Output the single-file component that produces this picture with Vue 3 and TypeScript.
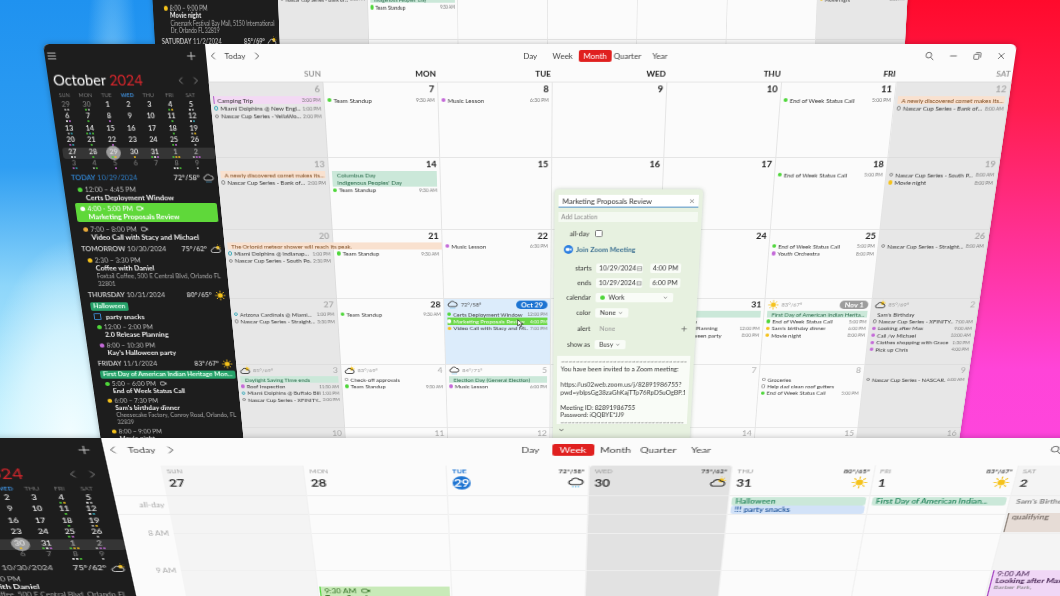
<template>
  <div class="desk">
    <svg class="sprite" aria-hidden="true">
      <symbol id="i-cloud" viewBox="0 0 24 24">
        <circle cx="17" cy="8" r="4" fill="#f5c21b" />
        <path d="M17 1v1.5M23.5 8H22M21.6 3.4l-1 1" stroke="#f5c21b" stroke-width="1.5" fill="none" />
        <path d="M6.5 19a4 4 0 0 1-.6-8A6 6 0 0 1 17 9.8 4.6 4.6 0 0 1 18 19z" fill="none" stroke="currentColor" stroke-width="2" />
      </symbol>
      <symbol id="i-rain" viewBox="0 0 24 24">
        <path d="M6.5 16a4 4 0 0 1-.6-8A6 6 0 0 1 17 6.8 4.6 4.6 0 0 1 18 16z" fill="none" stroke="currentColor" stroke-width="2" />
        <path d="M8 19v2M12 19v2M16 19v2" stroke="#4fb3e8" stroke-width="2" />
      </symbol>
      <symbol id="i-sun" viewBox="0 0 24 24">
        <circle cx="12" cy="12" r="5.5" fill="#f5c21b" />
        <path d="M12 1v4M12 19v4M1 12h4M19 12h4M4 4l3 3M17 17l3 3M20 4l-3 3M7 17l-3 3" stroke="#f5c21b" stroke-width="2" />
      </symbol>
      <symbol id="i-video" viewBox="0 0 24 24">
        <rect x="2" y="6" width="14" height="12" rx="3" fill="none" stroke="currentColor" stroke-width="2.4" />
        <path d="M16 11l6-4v10l-6-4z" fill="currentColor" />
      </symbol>
    </svg>

    <section v-for="w in windows" :key="w.id" class="win" :class="`win-${w.id}`">
      <aside class="side">
        <template v-if="w.view !== 'back'">
          <div class="side-top">
            <svg class="ico" viewBox="0 0 12 12"><path d="M1 2.5h10M1 6h10M1 9.5h10" /></svg>
            <svg class="ico" viewBox="0 0 12 12"><path d="M6 1v10M1 6h10" /></svg>
          </div>
          <div class="side-title">
            <h1>October <b>2024</b></h1>
            <svg class="ico arrow" viewBox="0 0 12 12"><path d="M8 2L4 6l4 4" /></svg>
            <svg class="ico arrow" viewBox="0 0 12 12"><path d="M4 2l4 4-4 4" /></svg>
          </div>
          <div class="mini-days">
            <span v-for="d in dayNames" :key="d" :class="{ wed: d === 'WED' }">{{ d }}</span>
          </div>
          <div v-for="(row, r) in miniRows" :key="r" class="mini-row" :class="{ hl: r === 4 }">
            <div v-for="c in row" :key="c.key" class="mini-cell" :class="{ off: c.off, sel: r === 4 && c.d === w.sel }">
              <span>{{ c.d }}</span>
              <i class="mini-dots"><u v-for="(col, k) in c.dots" :key="k" :style="{ background: col }" /></i>
            </div>
          </div>
        </template>

        <div class="agenda">
          <template v-for="(a, i) in w.agenda" :key="i">
            <div v-if="a.type === 'head'" class="ag-head" :class="{ today: a.today }">
              <b>{{ a.label }}</b>&nbsp;<span>{{ a.date }}</span>
              <em>{{ a.temp }}</em>
              <svg class="wx"><use :href="`#i-${a.icon}`" /></svg>
            </div>
            <div v-else-if="a.type === 'pill'" class="ag-pill">{{ a.text }}</div>
            <div v-else-if="a.type === 'todo'" class="ag-todo"><i />{{ a.text }}</div>
            <div v-else class="ag-ev" :class="{ active: a.active }">
              <div class="ag-time">
                <i class="ag-dot" :style="{ background: a.dot }" />{{ a.time }}
                <svg v-if="a.video" class="vid"><use href="#i-video" /></svg>
              </div>
              <div class="ag-title">{{ a.title }}</div>
              <div v-for="l in a.loc" :key="l" class="ag-loc">{{ l }}</div>
            </div>
          </template>
        </div>
      </aside>

      <main class="main">
        <div v-if="w.view !== 'back'" class="topbar">
          <div class="nav">
            <svg class="ico" viewBox="0 0 12 12"><path d="M8 2L4 6l4 4" /></svg>
            <span>Today</span>
            <svg class="ico" viewBox="0 0 12 12"><path d="M4 2l4 4-4 4" /></svg>
          </div>
          <div class="views">
            <span v-for="v in viewNames" :key="v" :class="{ on: v === w.activeView }">{{ v }}</span>
          </div>
          <div class="controls">
            <svg class="ico" viewBox="0 0 12 12"><circle cx="5" cy="5" r="3.4" /><path d="M7.5 7.5L11 11" /></svg>
            <svg class="ico" viewBox="0 0 12 12"><path d="M2 6h8" /></svg>
            <svg class="ico" viewBox="0 0 12 12"><rect x="2" y="4" width="6" height="6" rx="1" /><path d="M4 2h5a1 1 0 0 1 1 1v5" /></svg>
            <svg class="ico" viewBox="0 0 12 12"><path d="M2.5 2.5l7 7M9.5 2.5l-7 7" /></svg>
          </div>
        </div>

        <template v-if="w.view !== 'week'">
          <div v-if="w.view === 'month'" class="month-head">
            <span v-for="(d, i) in dayNames" :key="d" :class="{ wk: i === 0 || i === 6 }">{{ d }}</span>
          </div>
          <div class="month">
            <div
              v-for="c in w.view === 'back' ? backCells : monthCells"
              :key="c.key"
              class="cell"
              :class="{ weekend: c.weekend, today: c.today, off: c.off }"
            >
              <div class="cell-head">
                <svg v-if="c.icon" class="wx"><use :href="`#i-${c.icon}`" /></svg>
                <span v-if="c.temp" class="cell-temp">{{ c.temp }}</span>
                <span v-if="c.pill" class="cell-pill" :class="{ blue: c.today }">{{ c.pill }}</span>
                <span v-else class="cell-num">{{ c.d }}</span>
              </div>
              <div v-for="(e, i) in c.evs" :key="i" class="ev" :class="`k-${e.k}`">
                <i class="mark" />
                <span class="ev-t">{{ e.t }}</span>
                <span v-if="e.at" class="ev-at">{{ e.at }}</span>
              </div>
            </div>
          </div>
        </template>

        <div v-else class="week">
          <div class="gutter">
            <div class="wk-head" />
            <div class="wk-allday gut-l">all-day</div>
            <div class="gut-hours">
              <span v-for="h in ['8 AM', '9 AM']" :key="h">{{ h }}</span>
            </div>
          </div>
          <div v-for="d in weekDays" :key="d.name" class="wk-col" :class="d.shade">
            <div class="wk-head">
              <div class="wk-info">
                <span class="wk-name" :class="{ blue: d.today }">{{ d.name }}</span>
                <span class="wk-temp">{{ d.temp }}</span>
              </div>
              <div class="wk-info">
                <span class="wk-num" :class="{ circle: d.today }">{{ d.num }}</span>
                <svg v-if="d.icon" class="wx big"><use :href="`#i-${d.icon}`" /></svg>
              </div>
            </div>
            <div class="wk-allday">
              <div v-for="b in d.banners" :key="b.t" class="wk-banner" :class="b.k">{{ b.t }}</div>
            </div>
            <div class="wk-body">
              <div v-for="e in d.events" :key="e.time" class="wk-ev" :class="e.k" :style="{ top: e.top + 'px', height: e.h + 'px' }">
                <div class="wk-ev-time">{{ e.time }}<svg v-if="e.video" class="vid"><use href="#i-video" /></svg></div>
                <div class="wk-ev-title">{{ e.title }}</div>
                <div class="wk-ev-loc">{{ e.loc }}</div>
              </div>
            </div>
          </div>
        </div>
      </main>

      <template v-if="w.view === 'month'">
        <svg class="cursor" viewBox="0 0 10 14"><path d="M1 1v10l2.6-2.2L5.4 13l1.8-.8-1.8-4H9z" fill="#fff" stroke="#222" stroke-width="0.9" /></svg>
        <div class="pop">
          <div class="pop-title">
            <span>Marketing Proposals Review</span>
            <svg class="ico" viewBox="0 0 12 12"><path d="M3 3l6 6M9 3l-6 6" /></svg>
          </div>
          <div class="pop-loc">Add Location</div>
          <div class="pop-row pop-allday"><label>all-day</label><i class="pop-check" /></div>
          <div class="pop-zoom">
            <svg viewBox="0 0 24 24" class="zoom-ico">
              <circle cx="12" cy="12" r="12" fill="#2d7fe0" />
              <rect x="5" y="8" width="10" height="8" rx="2" fill="#fff" />
              <path d="M16 11l4-3v8l-4-3z" fill="#fff" />
            </svg>
            Join Zoom Meeting
          </div>
          <div v-for="r in dateRows" :key="r.l" class="pop-row date-row">
            <label>{{ r.l }}</label>
            <span class="field date">10/29/2024
              <svg viewBox="0 0 12 12" class="cal"><rect x="2" y="3" width="8" height="7" /><path d="M2 5.5h8" /></svg>
            </span>
            <span class="field time">{{ r.t }}</span>
          </div>
          <div class="pop-row">
            <label>calendar</label>
            <span class="field wide"><i class="wdot" />Work<svg viewBox="0 0 12 12" class="chev"><path d="M3 4.5l3 3 3-3" /></svg></span>
          </div>
          <div class="pop-row">
            <label>color</label>
            <span class="field">None<svg viewBox="0 0 12 12" class="chev"><path d="M3 4.5l3 3 3-3" /></svg></span>
          </div>
          <div class="pop-row tall">
            <label>alert</label>
            <span class="muted">None</span>
            <svg class="ico plus" viewBox="0 0 12 12"><path d="M6 2v8M2 6h8" /></svg>
          </div>
          <div class="pop-row">
            <label>show as</label>
            <span class="field">Busy<svg viewBox="0 0 12 12" class="chev"><path d="M3 4.5l3 3 3-3" /></svg></span>
          </div>
          <div class="pop-notes">
            <p v-for="(n, i) in notes" :key="i">{{ n }}</p>
          </div>
          <svg class="ico pop-more" viewBox="0 0 12 12"><path d="M3 4.5l3 3 3-3" /></svg>
        </div>
      </template>
    </section>
  </div>
</template>

<script setup lang="ts">
type Kind = 'green' | 'purple' | 'yellow' | 'teal' | 'gray' | 'box' | 'gap' | 'none' | 'b-green' | 'b-orange' | 'b-pink' | 'b-live' | 'b-orange wide'
interface Ev { k: Kind; t: string; at?: string }
interface Cell { d: string; off?: boolean; icon?: string; temp?: string; pill?: string; today?: boolean; evs?: Ev[] }
interface Agenda {
  type: 'head' | 'pill' | 'todo' | 'ev'
  label?: string; date?: string; temp?: string; icon?: string; today?: boolean
  text?: string
  time?: string; title?: string; loc?: string[]; dot?: string; video?: boolean; active?: boolean
}

const GREEN = '#4fd63a'
const PURPLE = '#c46ad8'
const YELLOW = '#f5c21b'
const TEAL = '#35a7b8'

const dayNames = ['SUN', 'MON', 'TUE', 'WED', 'THU', 'FRI', 'SAT']
const viewNames = ['Day', 'Week', 'Month', 'Quarter', 'Year']

const dotMap: Record<string, string[]> = {
  '0-0': ['#bbb', '#bbb'], '0-1': [GREEN, '#bbb'], '0-5': [GREEN, YELLOW], '0-6': ['#fff', '#bbb'],
  '1-0': ['#fff', PURPLE], '1-1': [GREEN], '1-2': [PURPLE], '1-5': [GREEN], '1-6': ['#fff', TEAL],
  '2-0': ['#bbb', TEAL], '2-1': [GREEN, TEAL, GREEN], '2-5': [GREEN], '2-6': ['#bbb', YELLOW],
  '3-0': [PURPLE, TEAL], '3-1': [GREEN], '3-2': [PURPLE], '3-5': [GREEN, PURPLE], '3-6': ['#bbb'],
  '4-0': ['#fff', '#bbb'], '4-1': [GREEN], '4-2': [GREEN, YELLOW], '4-3': [YELLOW], '4-4': [GREEN, '#fff', PURPLE], '4-5': [GREEN, YELLOW, YELLOW], '4-6': ['#bbb', PURPLE, PURPLE],
  '5-0': [PURPLE, TEAL], '5-1': ['#bbb', GREEN], '5-2': [PURPLE], '5-5': ['#fff', '#fff', GREEN], '5-6': ['#bbb'],
}

function buildMini() {
  const labels = [29, 30, ...Array.from({ length: 31 }, (_, i) => i + 1), ...Array.from({ length: 9 }, (_, i) => i + 1)]
  return Array.from({ length: 6 }, (_, r) =>
    Array.from({ length: 7 }, (_, c) => {
      const idx = r * 7 + c
      return { key: `${r}-${c}`, d: labels[idx], off: idx < 2 || idx > 32, dots: dotMap[`${r}-${c}`] || [] }
    }),
  )
}
const miniRows = buildMini()

const heads = {
  today: { type: 'head', label: 'TODAY', date: '10/29/2024', temp: '72°/58°', icon: 'rain', today: true },
  tomorrow: { type: 'head', label: 'TOMORROW', date: '10/30/2024', temp: '75°/62°', icon: 'cloud' },
} as Record<string, Agenda>

const movie: Agenda = {
  type: 'ev', time: '8:00 – 9:00 PM', title: 'Movie night', dot: YELLOW,
  loc: ['Cinemark Festival Bay Mall, 5150 International', 'Dr, Orlando FL 32819'],
}
const saturday: Agenda = { type: 'head', label: 'SATURDAY', date: '11/2/2024', temp: '85°/69°', icon: 'cloud' }
const coffee: Agenda = {
  type: 'ev', time: '2:30 – 3:30 PM', title: 'Coffee with Daniel', dot: YELLOW,
  loc: ['Foxtail Coffee, 500 E Central Blvd, Orlando FL', '32801'],
}

const midAgenda: Agenda[] = [
  heads.today,
  { type: 'ev', time: '12:00 – 4:45 PM', title: 'Certs Deployment Window', dot: GREEN },
  { type: 'ev', time: '4:00 - 5:00 PM', title: 'Marketing Proposals Review', dot: '#fff', video: true, active: true },
  { type: 'ev', time: '7:00 – 8:00 PM', title: 'Video Call with Stacy and Michael', dot: '#e8a93a', video: true },
  heads.tomorrow,
  coffee,
  { type: 'head', label: 'THURSDAY', date: '10/31/2024', temp: '80°/65°', icon: 'sun' },
  { type: 'pill', text: 'Halloween' },
  { type: 'todo', text: 'party snacks' },
  { type: 'ev', time: '12:00 – 2:00 PM', title: '2.0 Release Planning', dot: GREEN },
  { type: 'ev', time: '8:00 – 10:30 PM', title: "Kay's Halloween party", dot: PURPLE },
  { type: 'head', label: 'FRIDAY', date: '11/1/2024', temp: '83°/67°', icon: 'sun' },
  { type: 'pill', text: 'First Day of American Indian Heritage Mon...' },
  { type: 'ev', time: '5:00 – 6:00 PM', title: 'End of Week Status Call', dot: GREEN, video: true },
  { type: 'ev', time: '6:00 – 7:30 PM', title: "Sam's birthday dinner", dot: YELLOW, loc: ['Cheesecake Factory, Conroy Road, Orlando, FL', '32839'] },
  movie,
]

const windows = [
  { id: 'back', view: 'back', sel: 0, activeView: '', agenda: [movie, saturday] },
  { id: 'mid', view: 'month', sel: 29, activeView: 'Month', agenda: midAgenda },
  { id: 'front', view: 'week', sel: 30, activeView: 'Week', agenda: [heads.tomorrow, coffee] },
]

const standup: Ev = { k: 'green', t: 'Team Standup', at: '9:30 AM' }
const status: Ev = { k: 'green', t: 'End of Week Status Call', at: '5:00 PM' }
const music: Ev = { k: 'purple', t: 'Music Lesson', at: '6:30 PM' }

const weeks: Cell[][] = [
  [
    { d: '6', evs: [{ k: 'b-pink', t: 'Camping Trip', at: '3:00 PM' }, { k: 'teal', t: 'Miami Dolphins @ New Engl...', at: '1:00 PM' }, { k: 'gray', t: 'Nascar Cup Series - YellaWo...', at: '2:00 PM' }] },
    { d: '7', evs: [standup] },
    { d: '8', evs: [music] },
    { d: '9' },
    { d: '10' },
    { d: '11', evs: [status] },
    { d: '12', evs: [{ k: 'b-orange', t: 'A newly discovered comet makes its...' }, { k: 'gray', t: 'Nascar Cup Series - Bank of...', at: '8:00 AM' }] },
  ],
  [
    { d: '13', evs: [{ k: 'b-orange', t: 'A newly discovered comet makes its...' }, { k: 'gray', t: 'Nascar Cup Series - Bank of...', at: '2:00 PM' }] },
    { d: '14', evs: [{ k: 'b-green', t: 'Columbus Day' }, { k: 'b-green', t: "Indigenous Peoples' Day" }, standup] },
    { d: '15' },
    { d: '16' },
    { d: '17' },
    { d: '18', evs: [status] },
    { d: '19', evs: [{ k: 'gray', t: 'Nascar Cup Series - South P...', at: '8:00 AM' }, { k: 'yellow', t: 'Movie night', at: '8:00 PM' }] },
  ],
  [
    { d: '20', evs: [{ k: 'b-orange wide', t: 'The Orionid meteor shower will reach its peak.' }, { k: 'teal', t: 'Miami Dolphins @ Indianap...', at: '1:00 PM' }, { k: 'gray', t: 'Nascar Cup Series - South Po...', at: '2:30 PM' }] },
    { d: '21', evs: [{ k: 'gap', t: '' }, standup] },
    { d: '22', evs: [music] },
    { d: '23' },
    { d: '24' },
    { d: '25', evs: [status, { k: 'purple', t: 'Youth Orchestra', at: '8:00 PM' }] },
    { d: '26', evs: [{ k: 'gray', t: 'Nascar Cup Series - Straight...', at: '8:00 AM' }] },
  ],
  [
    { d: '27', evs: [{ k: 'teal', t: 'Arizona Cardinals @ Miami...', at: '1:00 PM' }, { k: 'gray', t: 'Nascar Cup Series - Straight...', at: '3:30 PM' }] },
    { d: '28', evs: [standup] },
    { d: '29', today: true, pill: 'Oct 29', icon: 'rain', temp: '72°/58°', evs: [{ k: 'green', t: 'Certs Deployment Window', at: '12:00 PM' }, { k: 'b-live', t: 'Marketing Proposals Review', at: '4:00 PM' }, { k: 'yellow', t: 'Video Call with Stacy and Mi...', at: '7:00 PM' }] },
    { d: '30' },
    { d: '31', evs: [{ k: 'b-green', t: 'Halloween' }, { k: 'box', t: 'party snacks' }, { k: 'green', t: '2.0 Release Planning', at: '12:00 PM' }, { k: 'purple', t: "Kay's Halloween party", at: '8:00 PM' }] },
    { d: '1', pill: 'Nov 1', icon: 'sun', temp: '83°/67°', evs: [{ k: 'b-green', t: 'First Day of American Indian Herita...' }, status, { k: 'yellow', t: "Sam's birthday dinner", at: '6:00 PM' }, { k: 'yellow', t: 'Movie night', at: '8:00 PM' }] },
    { d: '2', off: true, icon: 'cloud', temp: '85°/69°', evs: [{ k: 'none', t: "Sam's Birthday" }, { k: 'gray', t: 'Nascar Cup Series - XFINITY...', at: '7:00 AM' }, { k: 'purple', t: 'Looking after Max', at: '9:00 AM' }, { k: 'purple', t: 'Call /w Michael', at: '10:00 AM' }, { k: 'purple', t: 'Clothes shopping with Grace', at: '1:30 PM' }, { k: 'purple', t: 'Pick up Chris', at: '4:00 PM' }] },
  ],
  [
    { d: '3', off: true, icon: 'cloud', temp: '85°/69°', evs: [{ k: 'b-green', t: 'Daylight Saving Time ends' }, { k: 'purple', t: 'Roof Inspection', at: '11:30 AM' }, { k: 'teal', t: 'Miami Dolphins @ Buffalo Bills', at: '1:00 PM' }, { k: 'gray', t: 'Nascar Cup Series - XFINITY...', at: '2:00 PM' }] },
    { d: '4', off: true, icon: 'cloud', temp: '83°/69°', evs: [{ k: 'box', t: 'Check-off approvals' }, standup] },
    { d: '5', off: true, icon: 'rain', temp: '84°/71°', evs: [{ k: 'b-green', t: 'Election Day (General Election)' }, { k: 'purple', t: 'Music Lesson', at: '6:00 PM' }] },
    { d: '6', off: true },
    { d: '7', off: true },
    { d: '8', off: true, evs: [{ k: 'box', t: 'Groceries' }, { k: 'box', t: 'Help dad clean roof gutters' }, status] },
    { d: '9', off: true, evs: [{ k: 'gray', t: 'Nascar Cup Series - NASCAR...', at: '6:00 AM' }] },
  ],
  ['10', '11', '12', '13', '14', '15', '16'].map((d) => ({ d, off: true })),
]

function flatten(rows: Cell[][], start: number) {
  return rows.flatMap((row, r) =>
    row.map((c, i) => ({ ...c, key: `${start + r}-${i}`, weekend: i === 0 || i === 6 })),
  )
}
const monthCells = flatten(weeks, 0)
const backCells = flatten(weeks.slice(1, 3), 1)

interface WeekEvent { title: string; time: string; loc: string; k: string; top: number; h: number; video?: boolean }
interface WeekDay {
  name: string; num: string; shade?: string; today?: boolean; temp?: string; icon?: string
  banners?: { t: string; k: string }[]; events?: WeekEvent[]
}
const weekDays: WeekDay[] = [
  { name: 'SUN', num: '27', shade: 'soft' },
  { name: 'MON', num: '28', events: [{ title: 'Team Standup', time: '9:30 AM', loc: '', k: 'ev-green', top: 81, h: 42, video: true }] },
  { name: 'TUE', num: '29', today: true, temp: '72°/58°', icon: 'rain' },
  { name: 'WED', num: '30', shade: 'gray', temp: '75°/62°', icon: 'cloud' },
  { name: 'THU', num: '31', temp: '80°/65°', icon: 'sun', banners: [{ t: 'Halloween', k: 'wb-green' }, { t: '!!! party snacks', k: 'wb-blue' }] },
  { name: 'FRI', num: '1', temp: '83°/67°', icon: 'sun', banners: [{ t: 'First Day of American Indian...', k: 'wb-green' }] },
  {
    name: 'SAT', num: '2', shade: 'soft', banners: [{ t: "Sam's Birthday", k: 'wb-plain' }],
    events: [
      { title: '', time: 'qualifying', loc: '', k: 'ev-beige', top: -2, h: 21 },
      { title: 'Looking after Max', time: '9:00 AM', loc: 'Barber Park,', k: 'ev-purple', top: 62, h: 42 },
    ],
  },
]

const dateRows = [{ l: 'starts', t: '4:00 PM' }, { l: 'ends', t: '6:00 PM' }]
const notes = [
  '~~~~~~~~~~~~~~~~~~~~~~~~~~~~~~~~~~~~~~~~',
  'You have been invited to a Zoom meeting:',
  '\u00a0',
  'https://us02web.zoom.us/j/82891986755?',
  'pwd=yblpsGg38zaGhKajTTp76RpDSuOgBP.1',
  '\u00a0',
  'Meeting ID: 82891986755',
  'Password: iQQBYE*JJ9',
  '~~~~~~~~~~~~~~~~~~~~~~~~~~~~~~~~~~~~~~~~',
]
</script>

<style scoped>
.desk {
  position: relative;
  width: 1060px;
  height: 596px;
  overflow: hidden;
  font-family: Lato, "Open Sans", sans-serif;
  filter: blur(0.4px);
  background:
    radial-gradient(ellipse 90px 200px at 70px 440px, #f2fdff 0, rgba(230, 250, 255, 0.7) 55%, rgba(200, 240, 255, 0) 100%) no-repeat,
    radial-gradient(ellipse 26px 170px at 112px 90px, rgba(170, 225, 252, 0.55) 0, rgba(170, 225, 252, 0) 100%) no-repeat,
    linear-gradient(180deg, #1f92f0 0, #2f9ef2 28%, #8ed6fa 48%, #bdeffd 70%, #dcf9fe 100%) left / 50% 100% no-repeat,
    linear-gradient(180deg, #ff0a2c 0, #ff1d4e 18%, #ff2f8e 38%, #ff44d8 62%, #fc48e6 100%) right / 50% 100% no-repeat;
}
.sprite { position: absolute; width: 0; height: 0; }

/* the windows sit on a tilted desktop, each is one flat box under a projective transform */
.win {
  position: absolute;
  left: 43px;
  width: 974px;
  display: flex;
  overflow: hidden;
  border-radius: 6px 6px 0 0;
  background: #fbfbfb;
  box-shadow: 0 0 6px rgba(0, 0, 0, 0.25);
}
.win-back {
  top: -56px;
  height: 100px;
  transform-origin: 50% 100%;
  transform: matrix3d(0.77, 0, 0, 0, 0, 1, 0, 0.00015, 0, 0, 1, 0, 0, 0, 0, 1);
}
.win-mid {
  top: 44px;
  height: 470px;
  transform-origin: 50% 0;
  transform: matrix3d(1, 0, 0, 0, 0, 1, 0, 0.0003, 0, 0, 1, 0, 0, 0, 0, 1);
}
.win-front {
  top: 438px;
  height: 180px;
  transform-origin: 50% 0;
  transform: matrix3d(1.32, 0, 0, 0, 0, 1, 0, 0.00052, 0, 0, 1, 0, 0, 0, 0, 1);
}

.ico { width: 10px; height: 10px; fill: none; stroke: currentColor; stroke-width: 1; flex: none; }
.wx { width: 12px; height: 12px; flex: none; }
.wx.big { width: 13px; height: 13px; }
.vid { width: 8px; height: 8px; margin-left: 4px; vertical-align: -1px; }

/* sidebar */
.side { width: 162px; flex: none; background: #1d1d1d; color: #fff; display: flex; flex-direction: column; overflow: hidden; }
.win-back .side { justify-content: flex-end; }
.win-back .agenda { flex: none; padding-top: 0; }
.win-back .ag-ev { padding-bottom: 1.5px; }
.win-back .ag-head { margin-bottom: -3px; }
.win-back .ag-time, .win-back .ag-title, .win-back .ag-loc { line-height: 7.4px; }
.side-top { height: 24px; display: flex; justify-content: space-between; align-items: center; padding: 0 10px 2px 2px; color: #ddd; flex: none; }
.side-title { height: 21px; display: flex; align-items: center; padding: 0 8px 0 5px; flex: none; }
.side-title h1 { margin: 0; font-size: 14.6px; line-height: 20px; font-weight: 400; margin-right: auto; white-space: nowrap; }
.side-title b { color: #d8262c; font-weight: 400; }
.arrow { margin-left: 5px; color: #999; }
.mini-days { display: grid; grid-template-columns: repeat(7, 21.3px); padding-left: 3.5px; height: 10px; align-items: center; flex: none; }
.mini-days span { text-align: center; font-size: 5.5px; color: #7d7d7d; }
.mini-days .wed { color: #3f8ed8; font-weight: 700; }
.mini-row { display: grid; grid-template-columns: repeat(7, 21.3px); margin-left: 3.5px; height: 12.4px; flex: none; }
.mini-row.hl { background: rgba(255, 255, 255, 0.11); border-radius: 3px; }
.mini-cell { position: relative; text-align: center; font-size: 7.2px; line-height: 9px; font-weight: 700; color: #ddd; }
.mini-cell.off { color: #707070; }
.mini-row.hl .mini-cell.off { color: #aaa; }
.mini-cell.sel::before {
  content: "";
  position: absolute;
  left: 3.2px;
  top: -1.5px;
  width: 15px;
  height: 15px;
  border-radius: 50%;
  background: #9c9c9c;
}
.mini-cell span { position: relative; }
.mini-dots { position: absolute; left: 0; right: 0; top: 9px; display: flex; justify-content: center; gap: 1px; }
.mini-dots u { display: block; width: 2px; height: 2px; border-radius: 50%; }

.agenda { flex: 1; padding: 3px 4px 0 9px; min-height: 0; }
.ag-head { display: flex; align-items: center; height: 11px; font-size: 7.5px; color: #c8c8c8; white-space: nowrap; margin-bottom: 3px; }
.ag-head b { font-weight: 700; }
.ag-head em { margin-left: auto; font-style: normal; font-weight: 700; margin-right: 3px; }
.ag-head.today b, .ag-head.today span { color: #2f7fc8; }
.ag-ev { padding: 0 0 3.5px 4.5px; }
.ag-time { font-size: 7.2px; line-height: 9px; color: #bdbdbd; white-space: nowrap; display: flex; align-items: center; }
.ag-dot { width: 5px; height: 5px; border-radius: 50%; margin-right: 3px; flex: none; }
.ag-title { font-size: 7.6px; line-height: 9px; font-weight: 700; color: #f2f2f2; padding-left: 8px; white-space: nowrap; }
.ag-loc { font-size: 6.6px; line-height: 8.7px; color: #aaa; padding-left: 8px; white-space: nowrap; }
.ag-ev.active { background: #5fd83a; border-radius: 2px; padding: 1.5px 0 2px 4.5px; margin: -2.5px 0 3.5px 0; height: 21px; box-sizing: border-box; }
.ag-ev.active .ag-time, .ag-ev.active .ag-title { color: #fff; }
.ag-pill { width: fit-content; height: 9.5px; line-height: 9.5px; padding: 0 3px; margin: 0 0 2px 1px; background: #27a26a; border-radius: 2px; font-size: 7.3px; font-weight: 700; color: #e6fff0; white-space: nowrap; }
.ag-todo { display: flex; align-items: center; height: 10px; font-size: 7.6px; font-weight: 700; color: #eee; margin-bottom: 3.5px; padding-left: 3px; }
.ag-todo i { width: 6px; height: 6px; border: 1px solid #3f8ed8; border-radius: 1px; margin-right: 5px; }

/* main pane */
.main { width: 812px; flex: none; display: flex; flex-direction: column; color: #333; }
.win-back .main { justify-content: flex-end; }
.topbar { height: 24px; flex: none; display: flex; align-items: center; font-size: 8px; color: #444; }
.nav { width: 309px; padding-left: 2px; display: flex; align-items: center; box-sizing: border-box; }
.nav span { width: 32px; margin: 0 1px; text-align: center; }
.views { display: grid; grid-template-columns: repeat(5, 32.5px); text-align: center; }
.views span { line-height: 12px; border-radius: 2px; }
.views .on { background: #e0201f; color: #fff; }
.controls { margin-left: auto; display: flex; gap: 14px; padding-right: 9px; color: #555; align-items: center; }
.month-head { height: 13.5px; flex: none; display: grid; grid-template-columns: repeat(7, 116px); text-align: right; font-size: 8.2px; line-height: 13.5px; font-weight: 700; color: #222; }
.month-head span { padding-right: 2px; }
.month-head .wk { color: #999; }
.month { display: grid; grid-template-columns: repeat(7, 116px); grid-auto-rows: 79px; flex: none; }
.win-back .month { grid-auto-rows: 68px; height: 73px; overflow: hidden; }
.cell { position: relative; box-sizing: border-box; padding: 0 3px; border-top: 1px solid #e5e5e5; border-right: 1px solid #e5e5e5; min-width: 0; }
.cell.weekend { background: #e7e7e7; border-color: #ddd; }
.cell.today { background: #dcecfb; }
.cell-head { height: 14.5px; display: flex; align-items: center; gap: 3px; }
.cell-num { margin-left: auto; font-size: 9.5px; font-weight: 700; color: #222; }
.cell.weekend .cell-num { color: #aaa; }
.cell.off .cell-num { color: #aaa; font-weight: 400; }
.cell-temp { font-size: 6.2px; color: #999; }
.cell.today .cell-temp { color: #444; }
.cell-pill { margin-left: auto; font-size: 7.8px; font-weight: 700; line-height: 10px; padding: 0 5px; border-radius: 5px; background: #9d9d9d; color: #fff; }
.cell-pill.blue { background: #1d74d2; }
.ev { display: flex; align-items: center; height: 8.4px; font-size: 6.3px; color: #333; white-space: nowrap; min-width: 0; }
.ev-t { overflow: hidden; flex: 0 1 auto; }
.ev-at { margin-left: auto; padding-left: 2px; font-size: 5px; color: #777; flex: none; }
.mark { width: 4.2px; height: 4.2px; border-radius: 50%; margin-right: 2px; flex: none; box-sizing: border-box; }
.k-green .mark { background: #4fd63a; }
.k-purple .mark { background: #c46ad8; }
.k-yellow .mark { background: #f5c21b; }
.k-teal .mark { border: 1px solid #35a7b8; }
.k-gray .mark { border: 1px solid #888; }
.k-box .mark { border: 1px solid #888; border-radius: 1.5px; }
.k-none .mark, .k-b-green .mark, .k-b-orange .mark, .k-gap .mark { display: none; }
.k-none { padding-left: 4px; }
.k-b-green { background: #cbe8d9; padding-left: 5px; color: #264; }
.k-b-orange { background: #f9e1cf; padding-left: 4px; color: #7a4a20; }
.k-b-pink { background: #f3d9f4; border-left: 1.5px solid #b15ac8; padding-left: 3px; }
.k-b-pink .mark { display: none; }
.k-b-live { background: #6bd848; color: #fff; }
.k-b-live .mark { background: #fff; }
.k-b-live .ev-at { color: #fff; }
.wide { width: calc(200% + 6px); position: relative; z-index: 1; }

/* week */
.week { display: grid; grid-template-columns: 41px repeat(7, 110px); margin-top: 4px; flex: 1; min-height: 0; }
.gutter { font-size: 6.8px; color: #aaa; text-align: right; }
.wk-col { display: flex; flex-direction: column; border-right: 1px solid #f1f1f1; box-sizing: border-box; min-width: 0; }
.wk-col.soft { background: #f4f4f4; }
.wk-col.gray { background: #e2e2e2; border-radius: 3px 3px 0 0; }
.wk-head { height: 32px; box-sizing: border-box; padding: 2px 3px 0 4px; flex: none; border-bottom: 1px solid #ececec; }
.wk-info { display: flex; justify-content: space-between; align-items: center; }
.wk-name { font-size: 5.8px; line-height: 8px; color: #999; }
.wk-name.blue { color: #1d74d2; font-weight: 700; }
.wk-temp { font-size: 5.5px; line-height: 8px; color: #444; font-weight: 700; }
.wk-num { margin-top: 1px; font-size: 10.5px; line-height: 14px; font-weight: 700; color: #333; }
.wk-num.circle { width: 14px; text-align: center; border-radius: 50%; background: #1d74d2; color: #fff; }
.wk-allday { height: 20px; box-sizing: border-box; padding: 1px 2px 0; border-bottom: 1px solid #ececec; flex: none; }
.gut-l { padding: 5px 3px 0 0; line-height: 8px; }
.wk-banner { height: 8.5px; line-height: 8.5px; font-size: 6.6px; font-weight: 700; padding-left: 3px; border-radius: 2px; white-space: nowrap; overflow: hidden; }
.wb-green { background: #cbe8d9; color: #2e8a62; }
.wb-blue { background: #d2e2f8; color: #2b5ea0; margin-top: 0.5px; }
.wb-plain { color: #7f7f7f; }
.wk-body {
  position: relative;
  flex: 1;
  background: repeating-linear-gradient(180deg, transparent 0 41px, #efefef 41px 42px) 0 -21px;
}
.gut-hours { position: relative; padding-top: 16px; display: flex; flex-direction: column; gap: 34px; }
.gut-hours span { line-height: 8px; padding-right: 4px; }
.wk-ev { position: absolute; left: 1px; right: 1px; box-sizing: border-box; padding: 1px 3px; font-size: 6.8px; line-height: 7.5px; border-left: 1px solid; overflow: hidden; }
.wk-ev-title { font-weight: 700; }
.wk-ev-loc { font-size: 5.8px; color: #777; }
.ev-green { background: #c8eab8; border-color: #4fd63a; color: #2e6b20; }
.ev-beige { background: #e6dcd6; border-color: #8a8078; color: #5a504a; }
.ev-purple { background: #f0d7f6; border-color: #a33fc0; color: #42204f; }

/* overlays on the month view */
.cursor { position: absolute; left: 473px; top: 300px; width: 7px; height: 10px; z-index: 2; }
.pop {
  position: absolute;
  left: 513px;
  top: 152px;
  width: 155px;
  height: 310px;
  box-sizing: border-box;
  padding: 6px 4px 0;
  background: #e7f1e0;
  border-radius: 4px;
  box-shadow: 0 0 4px rgba(60, 100, 50, 0.3);
  font-size: 7.2px;
  color: #333;
}
.pop-title { height: 13px; display: flex; align-items: center; justify-content: space-between; background: #fff; border-bottom: 1px solid #3f86c4; padding: 0 3px 0 4px; font-size: 7.6px; }
.pop-title .ico { width: 8px; height: 8px; color: #888; }
.pop-loc { margin-top: 5px; height: 11px; line-height: 11px; padding-left: 3px; font-size: 6.6px; color: #888; background: rgba(255, 255, 255, 0.55); }
.pop-row { display: flex; align-items: center; height: 18px; }
.pop-row.date-row { height: 16.6px; }
.pop-row label { width: 36px; text-align: right; margin-right: 5px; flex: none; }
.pop-allday { margin-top: 4px; }
.pop-allday label { width: 33px; margin-right: 6px; }
.pop-check { width: 6px; height: 6px; border: 1px solid #777; border-radius: 1.5px; background: #fff; }
.pop-zoom { height: 18px; margin-bottom: 4.5px; display: flex; align-items: center; font-weight: 700; font-size: 7.4px; color: #3b6f90; padding-left: 6px; }
.zoom-ico { width: 10px; height: 10px; margin-right: 3px; }
.field { display: inline-flex; align-items: center; height: 11px; padding: 0 5px; background: rgba(255, 255, 255, 0.75); border-radius: 2px; white-space: nowrap; }
.field.date { width: 50px; box-sizing: border-box; justify-content: space-between; padding: 0 2px 0 3px; }
.field.time { margin-left: 8px; padding: 0 3px; width: 33px; box-sizing: border-box; justify-content: flex-end; }
.field.wide { width: 84px; box-sizing: border-box; }
.cal { width: 7px; height: 7px; fill: none; stroke: #777; stroke-width: 1; flex: none; }
.chev { width: 7px; height: 7px; fill: none; stroke: #666; stroke-width: 1; margin-left: auto; padding-left: 2px; box-sizing: content-box; }
.wdot { width: 5px; height: 5px; border-radius: 50%; background: #4fd63a; margin-right: 4px; }
.muted { color: #999; padding-left: 5px; }
.plus { margin-left: auto; margin-right: 4px; width: 9px; height: 9px; color: #555; }
.pop-row.tall { height: 20px; }
.pop-notes { margin-top: 4px; background: rgba(255, 255, 255, 0.75); padding: 3px 4px; height: 85px; box-sizing: border-box; font-size: 7.1px; line-height: 9.5px; overflow: hidden; }
.pop-notes p { margin: 0; white-space: nowrap; overflow: hidden; }
.pop-more { margin: 3px 0 0 1px; width: 9px; height: 9px; color: #666; }
</style>

<style>
html, body { margin: 0; background: #222; }
</style>
